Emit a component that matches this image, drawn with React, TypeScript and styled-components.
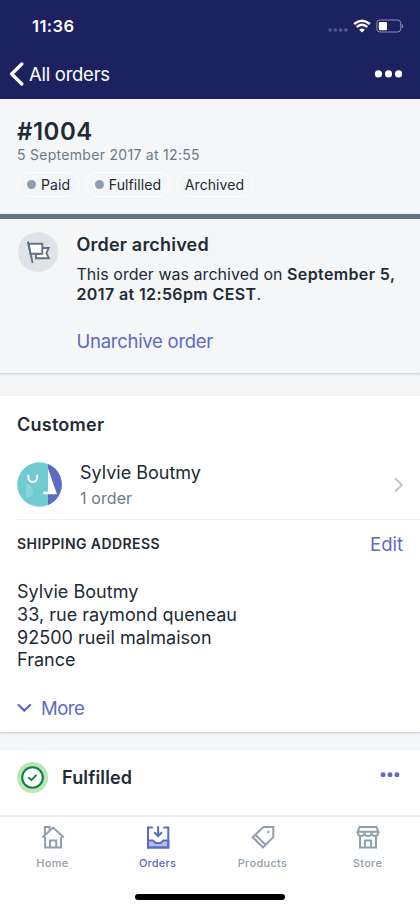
import React from "react";
import styled, { createGlobalStyle } from "styled-components";

const ink = "#212b36";
const subdued = "#6b7a88";
const indigo = "#5c6ac4";
const slate = "#919eab";

const GlobalStyle = createGlobalStyle`
  * { box-sizing: border-box; }
  body { margin: 0; background: #f4f6f8; }
`;

const Screen = styled.main`
  width: 420px;
  height: 909px;
  display: flex;
  flex-direction: column;
  overflow: hidden;
  background: #f4f6f8;
  color: ${ink};
  font-family: Inter, "Liberation Sans", sans-serif;
`;

interface TextProps {
  $size: number;
  $line: number;
  $weight?: number;
  $track?: number;
  $color?: string;
}

const Text = styled.span<TextProps>`
  display: block;
  white-space: nowrap;
  font-size: ${(p) => p.$size}px;
  line-height: ${(p) => p.$line}px;
  font-weight: ${(p) => p.$weight ?? 400};
  letter-spacing: ${(p) => p.$track ?? 0}px;
  color: ${(p) => p.$color ?? "inherit"};
`;

const Strong = styled.strong`
  font-weight: 600;
  letter-spacing: 0.38px;
`;

const Header = styled.header`
  height: 99px;
  flex: none;
  background: #1c2260;
  color: #fff;
`;

const StatusBar = styled.div`
  height: 52px;
  display: flex;
  align-items: center;
  justify-content: space-between;
  padding: 0 16px 0 32px;
`;

const StatusIcons = styled.div`
  display: flex;
  align-items: center;
  gap: 5px;
`;

const NavBar = styled.div`
  height: 44px;
  display: flex;
  align-items: center;
  justify-content: space-between;
  padding: 0 17px 0 9px;
`;

const BackLink = styled.div`
  display: flex;
  align-items: center;
  gap: 5px;
`;

const Summary = styled.section`
  height: 115px;
  flex: none;
  padding: 18px 17px 0;
`;

const Badges = styled.div`
  display: flex;
  gap: 5px;
  margin-top: 10px;
`;

const Badge = styled.div<{ $width: number }>`
  width: ${(p) => p.$width}px;
  height: 25px;
  display: flex;
  align-items: center;
  justify-content: center;
  gap: 5px;
  border: 1.5px solid #fff;
  border-radius: 13px;
`;

const StatusDot = styled.i`
  width: 9px;
  height: 9px;
  border-radius: 50%;
  background: ${slate};
`;

const Banner = styled.section`
  height: 159px;
  flex: none;
  display: flex;
  padding: 14px 0 0 18px;
  border-top: 5px solid #637381;
  box-shadow: 0 1px 2px rgba(99, 115, 145, 0.35);
`;

const FlagCircle = styled.div`
  width: 40px;
  height: 40px;
  flex: none;
  margin-top: -1px;
  border-radius: 50%;
  background: #dfe3e8;
`;

const BannerBody = styled.div`
  margin-left: 18.5px;
`;

const BannerCopy = styled.div`
  margin: 8px 0 26px;
`;

const CustomerCard = styled.section`
  height: 336px;
  flex: none;
  margin-top: 23px;
  padding: 17px 17px 0;
  background: #fff;
  box-shadow: 0 1px 2px rgba(99, 115, 145, 0.35);
`;

const CustomerRow = styled.div`
  height: 83px;
  margin: 0 -17px 0 0;
  padding: 13px 16px 0 0;
  display: flex;
  align-items: center;
  border-bottom: 1px solid #eff0f2;
`;

const Names = styled.div`
  flex: 1;
  margin: 2px 0 0 18px;
`;

const AddressHeader = styled.div`
  height: 48px;
  display: flex;
  align-items: center;
  justify-content: space-between;
`;

const Address = styled.div`
  margin-top: 13.3px;
`;

const More = styled.div`
  display: flex;
  align-items: center;
  gap: 9px;
  margin-top: 24.7px;
`;

const FulfilledCard = styled.section`
  height: 65px;
  flex: none;
  display: flex;
  align-items: flex-start;
  margin-top: 18px;
  padding: 12px 20px 0 17px;
  background: #fff;
`;

const FulfilledLabel = styled.div`
  flex: 1;
  margin: 4px 0 0 14px;
`;

const MoreActions = styled.div`
  margin-top: 10px;
  display: flex;
`;

const TabBar = styled.nav`
  height: 94px;
  flex: none;
  display: flex;
  flex-direction: column;
  align-items: center;
  border-top: 2px solid #e9ebee;
  background: #fefefe;
`;

const Tabs = styled.div`
  width: 420px;
  height: 77px;
  display: grid;
  grid-template-columns: repeat(4, 105px);
`;

const Tab = styled.div<{ $active: boolean }>`
  display: flex;
  flex-direction: column;
  align-items: center;
  padding-top: 8px;
  gap: 7px;
  color: ${(p) => (p.$active ? indigo : slate)};
`;

const HomeIndicator = styled.div`
  width: 150px;
  height: 6px;
  border-radius: 3px;
  background: #000;
`;

const Signal = () => (
  <svg width="20" height="24" viewBox="0 0 20 24" fill="#555a8b">
    {[2.2, 7.4, 12.7, 17.9].map((x) => <circle key={x} cx={x} cy="16" r="1.8" />)}
  </svg>
);

const Wifi = () => (
  <svg width="18" height="24" viewBox="0 0 18 24" fill="none" stroke="#fff" strokeWidth="2.3">
    <path d="M1.1 10Q9 3.4 16.9 10" />
    <path d="M3.7 13Q9 8.6 14.3 13" />
    <path d="M9 18.6 6.1 15.7Q9 13.3 11.9 15.7Z" fill="#fff" stroke="none" />
  </svg>
);

const Battery = () => (
  <svg width="28" height="24" viewBox="0 0 28 24">
    <rect x=".8" y="6" width="24" height="12" rx="3.2" fill="none" stroke="#8d90b2" />
    <rect x="2.8" y="8" width="8.2" height="8.2" rx="1.3" fill="#fff" />
    <path d="M26.2 10.3q1.2 1.7 0 3.6Z" fill="#8d90b2" stroke="#8d90b2" strokeWidth=".7" />
  </svg>
);

const BackChevron = () => (
  <svg width="15" height="24" viewBox="0 0 15 24">
    <path d="M12.8 2 2.7 12 12.8 22" fill="none" stroke="#fff" strokeWidth="3.3" strokeLinecap="round" strokeLinejoin="round" />
  </svg>
);

const Ellipsis = ({ size, color }: { size: number; color: string }) => (
  <svg width={size} height={size * 0.27} viewBox="0 0 30 8" fill={color}>
    <circle cx="4.6" cy="4" r="3.7" />
    <circle cx="15" cy="4" r="3.7" />
    <circle cx="25.4" cy="4" r="3.7" />
  </svg>
);

const Flag = () => (
  <svg width="40" height="40" viewBox="0 0 40 40" fill="#fff" stroke="#637381" strokeWidth="1.9">
    <path d="M21.5 16H30.8L28.4 21.2 30.8 26.2H18V22H21.5Z" />
    <path d="M10.5 11.7H24.3V21.8H12.6Z" />
    <path d="M9.8 9.5 14.6 31" fill="none" />
  </svg>
);

const Avatar = () => (
  <svg width="45" height="45" viewBox="0 0 45 45">
    <defs>
      <clipPath id="avatarShape"><circle cx="22.5" cy="22.5" r="22.3" /></clipPath>
    </defs>
    <g clipPath="url(#avatarShape)">
      <path d="M0 0H45V45H0Z" fill="#70cbd0" />
      <path d="M31 0H45V45H31Z" fill="#5c6ac4" />
      <path d="M9 22A7 7 0 0 1 9 36Z" fill="#8bd5d9" />
      <path d="M31 6.5 40 32.2H27.3A1.3 1.3 0 0 1 27.3 29.6H31Z" fill="#fff" />
      <path d="M11.3 13.5V15.5A4.4 4.4 0 0 0 20.1 15.5V13.5" fill="none" stroke="#fff" strokeWidth="2" strokeLinecap="round" />
    </g>
  </svg>
);

const ForwardChevron = () => (
  <svg width="12" height="18" viewBox="0 0 12 18">
    <path d="M3 2.2 9.8 9 3 15.8" fill="none" stroke="#c3c5c9" strokeWidth="2" />
  </svg>
);

const DownChevron = () => (
  <svg width="15" height="10" viewBox="0 0 15 10">
    <path d="M1.6 2 7.3 7.6 13 2" fill="none" stroke={indigo} strokeWidth="2.3" strokeLinecap="round" />
  </svg>
);

const Fulfillment = () => (
  <svg width="31" height="31" viewBox="0 0 31 31">
    <circle cx="15.5" cy="15.5" r="15.5" fill="#bbe5b3" />
    <circle cx="15.5" cy="15.5" r="10.3" fill="#fff" stroke="#108043" strokeWidth="2.1" />
    <path d="M11.8 15.8 14.4 18.1 19 13.3" fill="none" stroke="#108043" strokeWidth="1.9" strokeLinecap="round" strokeLinejoin="round" />
  </svg>
);

const TabGlyph = styled.svg`
  width: 24px;
  height: 24px;
  fill: none;
  stroke: currentColor;
  stroke-width: 2;
`;

const HomeIcon = () => (
  <TabGlyph viewBox="0 0 24 24">
    <path d="M4.1 12V22.6H20V12" />
    <path d="M1.4 12.6 12.1 2.6 22.8 12.6" />
    <path d="M3.9 10V2H8.6V5.4" />
    <path d="M9 22.5V15.4H15.2V22.5" />
  </TabGlyph>
);

const OrdersIcon = () => (
  <TabGlyph viewBox="0 0 24 24">
    <path d="M2 15.4H7L9.5 17.9H14.9L17.4 15.4H22.3V22.6H2Z" fill="#b3bcf5" />
    <path d="M6.8 2.4H2V22.6H22.3V2.4H17.4M12.1 1.2V10.5M8.2 7.2 12.1 11 16 7.2" />
  </TabGlyph>
);

const ProductsIcon = () => (
  <TabGlyph viewBox="0 0 24 24">
    <path d="M12.5 2H22.3V12.2L12 22.4 1.7 12.2ZM4.5 9.9 14.5 19.8" />
    <circle cx="17.3" cy="6.9" r="1.2" fill="currentColor" stroke="none" />
  </TabGlyph>
);

const StoreIcon = () => (
  <TabGlyph viewBox="0 0 24 24">
    <path d="M3.6 2H20.4L22.4 6.7H1.6ZM1.9 6.7V8.2A3.3 2.8 0 0 0 8.5 8.2A3.5 2.8 0 0 0 15.5 8.2A3.3 2.8 0 0 0 22.1 8.2V6.7M8.5 6.7V8.5M15.5 6.7V8.5" />
    <path d="M4 11V22.6H20V11M8.9 22.5V15.4H15.1V22.5" />
  </TabGlyph>
);

const tabs = [
  { label: "Home", icon: <HomeIcon />, active: false },
  { label: "Orders", icon: <OrdersIcon />, active: true },
  { label: "Products", icon: <ProductsIcon />, active: false },
  { label: "Store", icon: <StoreIcon />, active: false },
];

const addressLines = ["Sylvie Boutmy", "33, rue raymond queneau", "92500 rueil malmaison", "France"];

export default function App() {
  return (
    <Screen>
      <GlobalStyle />
      <Header>
        <StatusBar>
          <Text $size={16.5} $line={20} $weight={600} $track={0.45}>11:36</Text>
          <StatusIcons><Signal /><Wifi /><Battery /></StatusIcons>
        </StatusBar>
        <NavBar>
          <BackLink>
            <BackChevron />
            <Text $size={18.5} $line={24} $track={-0.27}>All orders</Text>
          </BackLink>
          <Ellipsis size={29} color="#fff" />
        </NavBar>
      </Header>

      <Summary>
        <Text $size={24} $line={30} $weight={600} $track={0.5}>#1004</Text>
        <Text $size={14} $line={15} $color={subdued} $track={0.29}>5 September 2017 at 12:55</Text>
        <Badges>
          <Badge $width={63}><StatusDot /><Text $size={14} $line={20} $track={0.1}>Paid</Text></Badge>
          <Badge $width={86}><StatusDot /><Text $size={14} $line={20} $track={0.1}>Fulfilled</Text></Badge>
          <Badge $width={77}><Text $size={14} $line={20} $track={0.1}>Archived</Text></Badge>
        </Badges>
      </Summary>

      <Banner>
        <FlagCircle><Flag /></FlagCircle>
        <BannerBody>
          <Text $size={18} $line={23} $weight={600} $track={0.2}>Order archived</Text>
          <BannerCopy>
            <Text $size={16} $line={20} $track={0.03}>This order was archived on <Strong>September 5,</Strong></Text>
            <Text $size={16} $line={20}><Strong>2017 at 12:56pm CEST</Strong>.</Text>
          </BannerCopy>
          <Text $size={18.5} $line={22} $color={indigo} $track={-0.27}>Unarchive order</Text>
        </BannerBody>
      </Banner>

      <CustomerCard>
        <Text $size={18} $line={24} $weight={600} $track={0.25}>Customer</Text>
        <CustomerRow>
          <Avatar />
          <Names>
            <Text $size={18} $line={24}>Sylvie Boutmy</Text>
            <Text $size={16} $line={26} $color={subdued} $track={0.1}>1 order</Text>
          </Names>
          <ForwardChevron />
        </CustomerRow>
        <AddressHeader>
          <Text $size={14} $line={20} $weight={600} $track={0.42}>SHIPPING ADDRESS</Text>
          <Text $size={18.5} $line={22} $color={indigo}>Edit</Text>
        </AddressHeader>
        <Address>
          {addressLines.map((line) => <Text key={line} $size={18} $line={22.7} $track={0.03}>{line}</Text>)}
        </Address>
        <More>
          <DownChevron />
          <Text $size={18.5} $line={22} $color={indigo} $track={-0.5}>More</Text>
        </More>
      </CustomerCard>

      <FulfilledCard>
        <Fulfillment />
        <FulfilledLabel><Text $size={18} $line={24} $weight={600} $track={0.15}>Fulfilled</Text></FulfilledLabel>
        <MoreActions><Ellipsis size={20} color={indigo} /></MoreActions>
      </FulfilledCard>

      <TabBar>
        <Tabs>
          {tabs.map((tab) => (
            <Tab key={tab.label} $active={tab.active}>
              {tab.icon}
              <Text $size={11} $line={14} $weight={500} $track={tab.active ? 0.2 : 0.3}>{tab.label}</Text>
            </Tab>
          ))}
        </Tabs>
        <HomeIndicator />
      </TabBar>
    </Screen>
  );
}
